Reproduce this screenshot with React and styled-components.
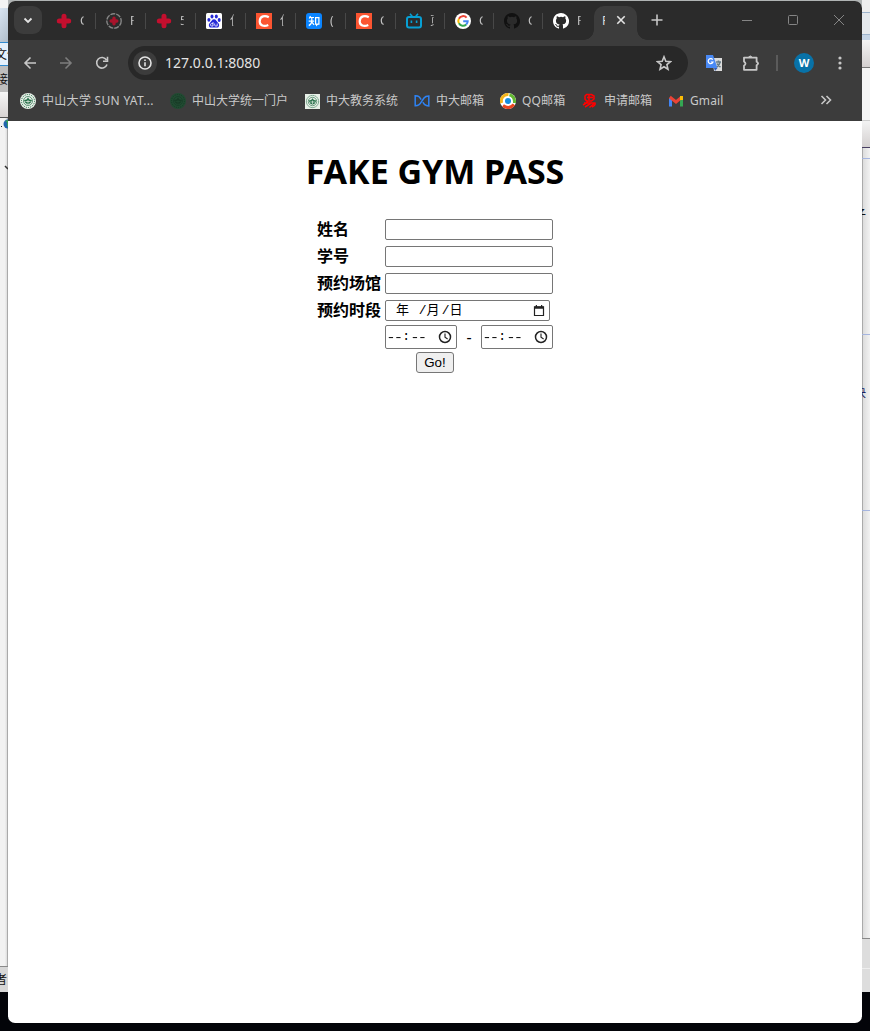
import React from 'react';
import styled, { createGlobalStyle } from 'styled-components';

const Global = createGlobalStyle`
  * { box-sizing: border-box; }
  body { margin: 0; background: #030409; overflow: hidden; }
`;
const ui = `'Noto Sans', 'Noto Sans CJK SC', sans-serif`;

const Desktop = styled.div`
  display: grid;
  grid-template-columns: 8px 854px 8px;
  width: 870px;
  height: 1031px;
  background: linear-gradient(#b0b4b4 0 12px, #030409 12px);
`;
const Edge = styled.div`
  display: flex;
  flex-direction: column;
  height: 992px;
  overflow: hidden;
  background: ${p => p.$left ? 'linear-gradient(90deg,#f2f2f2 60%,#ddd 7px,#aaa 7px)' : 'linear-gradient(90deg,#aaa 1px,#dcdcdc 1px,#f2f2f2)'};
`;
const Strip = styled.div`
  flex: none;
  height: ${p => p.$h}px;
  background: ${p => p.$bg || 'transparent'};
  border-top: ${p => p.$line ? `1px solid ${p.$line}` : '0'};
  font: 12px/${p => p.$h}px ${ui};
  color: ${p => p.$ink || '#111'};
  white-space: nowrap;
  overflow: hidden;
  svg { display: block; }
`;
const Glyph = styled.span`
  display: block;
  margin-left: ${p => p.$shift}px;
`;
const Window = styled.div`
  margin-top: 1px;
  height: 1022px;
  display: flex;
  flex-direction: column;
  border-radius: 7px;
  overflow: hidden;
  background: #fff;
`;
const TabStrip = styled.div`
  height: 39px;
  flex: none;
  display: flex;
  background: #2b2b2b;
  padding-left: 6px;
`;
const TabSearch = styled.div`
  width: 28px;
  height: 28px;
  margin: 5px 4px 0 0;
  border-radius: 9px;
  background: #3c3c3c;
`;
const Tab = styled.div`
  width: ${p => p.$w}px;
  height: 39px;
  display: flex;
  align-items: center;
  padding-left: 10px;
  svg { flex: none; }
`;
const TabTitle = styled.span`
  width: 4px;
  margin-left: 8px;
  overflow: hidden;
  white-space: nowrap;
  font: 12px/16px ${ui};
  color: #c7c7c7;
  mask-image: linear-gradient(90deg, #000 50%, #0006);
`;
const TabDivider = styled.span`
  width: 1px;
  height: 16px;
  margin-left: ${p => p.$gap}px;
  background: #484848;
`;
const ActiveTab = styled.div`
  width: 43px;
  height: 34px;
  margin: 5px 0 0 1px;
  padding-left: 8px;
  display: flex;
  align-items: center;
  background: #3c3c3c;
  border-radius: 10px 10px 0 0;
  position: relative;
  &::before, &::after {
    content: '';
    position: absolute;
    bottom: 0;
    width: 10px;
    height: 10px;
  }
  &::before { left: -10px; background: radial-gradient(circle at 0 0, transparent 9.5px, #3c3c3c 10px); }
  &::after { right: -10px; background: radial-gradient(circle at 100% 0, transparent 9.5px, #3c3c3c 10px); }
`;
const ActiveTitle = styled.span`
  width: 3px;
  overflow: hidden;
  font: 12px/16px ${ui};
  color: #ddd;
  margin-right: 8px;
  padding-bottom: 4px;
  height: 20px;
`;
const CloseWrap = styled.div`
  height: 16px;
  margin-top: -6px;
`;
const NewTab = styled.div`
  margin: 11px 0 0 12px;
  height: 16px;
`;
const Controls = styled.div`
  display: flex;
  gap: 30px;
  margin: 11px 15px 0 auto;
`;
const Chrome = styled.div`
  background: #3c3c3c;
  flex: none;
  height: 81px;
`;
const NavBar = styled.div`
  display: flex;
  align-items: center;
  height: 46px;
  padding-left: 14px;
`;
const NavIcon = styled.div`
  width: 16px;
  height: 16px;
  margin-right: ${p => p.$gap}px;
  svg { display: block; }
`;
const Omnibox = styled.div`
  width: 560px;
  height: 34px;
  border-radius: 17px;
  background: #282828;
  display: flex;
  align-items: center;
  padding: 0 16px 0 5px;
  color: #e3e3e3;
  font: 14px/20px ${ui};
`;
const Url = styled.span`
  letter-spacing: 0.02px;
  margin-top: -1px;
`;
const SiteInfo = styled.div`
  width: 24px;
  height: 24px;
  border-radius: 50%;
  background: #3c3c3c;
  margin-right: 8px;
  display: grid;
  place-items: center;
`;
const StarWrap = styled.div`
  margin-left: auto;
  height: 16px;
  svg { display: block; }
`;
const Extensions = styled.div`
  display: flex;
  align-items: center;
  padding-left: 18px;
`;
const ToolDivider = styled.div`
  width: 2px;
  height: 16px;
  background: #5b5b5b;
  margin: 0 16px 0 17px;
`;
const Avatar = styled.div`
  width: 20px;
  height: 20px;
  border-radius: 50%;
  background: #0872a8;
  color: #fff;
  font: bold 11px/20px ${ui};
  text-align: center;
  margin-right: 18px;
`;
const Bookmarks = styled.div`
  height: 30px;
  display: flex;
  align-items: center;
  padding-left: 12px;
  color: #c9c9c9;
`;
const Bookmark = styled.div`
  width: ${p => p.$w}px;
  flex: none;
  display: flex;
  align-items: center;
  gap: 6px;
  white-space: nowrap;
  font: 12px/16px ${ui};
  letter-spacing: ${p => p.$track || 0}px;
  svg { flex: none; }
`;
const More = styled.div`
  margin-left: auto;
  margin-right: 28px;
  height: 18px;
`;
const Page = styled.main`
  display: flex;
  flex-direction: column;
  align-items: center;
  font-family: ${ui};
  color: #000;
`;
const Title = styled.h1`
  margin: 26px 0 21px;
  font: bold 34px/48px ${ui};
  letter-spacing: -0.04px;
  white-space: nowrap;
`;
const Form = styled.div`
  width: 236px;
  display: flex;
  flex-direction: column;
`;
const Row = styled.div`
  display: flex;
  align-items: center;
  height: 27px;
  margin-bottom: ${p => p.$after || 0}px;
`;
const Label = styled.label`
  width: 68px;
  flex: none;
  font: bold 16px/21px ${ui};
`;
const Field = styled.div`
  width: ${p => p.$w || 168}px;
  height: ${p => p.$h || 21}px;
  flex: none;
  border: 1px solid #767676;
  border-radius: 2px;
  display: flex;
  align-items: center;
  background: #fff;
  padding: 0 ${p => p.$right || 0}px 0 ${p => p.$leftPad || 0}px;
  justify-content: space-between;
  font: 13px/16px 'Liberation Mono', 'Noto Sans CJK SC', monospace;
  white-space: pre;
`;
const DateParts = styled.span`
  display: flex;
  gap: 2px;
  margin-left: -1px;
`;
const TimeDigits = styled.span`
  display: flex;
  align-items: center;
  margin-top: -1px;
`;
const Digits = styled.span`
  display: inline-block;
  width: 11.2px;
  transform: scaleX(1.35);
  transform-origin: 0 50%;
  font: 13px/16px 'Liberation Sans', sans-serif;
  letter-spacing: 1.2px;
`;
const Colon = styled.span`
  width: 8px;
  margin: 0 2px 0 3px;
  text-align: center;
`;
const Dash = styled.span`
  width: 24px;
  text-align: center;
  font: 16px/20px ${ui};
`;
const Times = styled.div`
  display: flex;
  align-items: center;
  padding-left: 68px;
  height: 24px;
  margin-top: -2px;
`;
const Go = styled.button`
  align-self: center;
  width: 38px;
  height: 21px;
  margin-top: 3px;
  padding: 0;
  border: 1px solid #767676;
  border-radius: 3px;
  background: #efefef;
  color: #000;
  font: 13.33px/17px 'Liberation Sans', sans-serif;
`;

const Svg = ({ s = 16, c = '#c7c7c7', w = 1.6, children, ...r }) => (
  <svg width={s} height={s} viewBox="0 0 16 16" fill="none" stroke={c} strokeWidth={w} {...r}>{children}</svg>
);
const Cross = () => <Svg c="#c40f2e" w="5" strokeLinecap="round"><path d="M8 3.300v9.400M3.300 8h9.400" /></Svg>;
const RingCross = () => (
  <Svg c="#858585" w="1.400"><circle cx="8" cy="8" r="7.200" strokeDasharray="5 1" /><path d="M8 5.200v5.600M5.200 8h5.600" stroke="#a9132b" strokeWidth="3.400" strokeLinecap="round" /></Svg>
);
const Baidu = () => (
  <Svg stroke="none"><rect width="16" height="16" rx="1.500" fill="#fff" />
    <g fill="#2529d8"><ellipse cx="6" cy="3.500" rx="1.500" ry="2" /><ellipse cx="10.300" cy="3.500" rx="1.500" ry="2" /><ellipse cx="2.900" cy="6.800" rx="1.500" ry="1.900" /><ellipse cx="13.200" cy="7" rx="1.500" ry="1.900" /><path d="M8 6.300c2 0 2.500 2 4 3.400 2 1.800 1.400 5-1.300 4.900-1.600-.2-3.600-.2-5.200 0C2.700 14.800 2 11.500 4 9.700 5.600 8.200 6 6.300 8 6.300Z" /></g>
    <path d="M7 9v4H5.500q-1 0-1-1.200t1-1.200H7M8.700 10.500v1.600q0 .9.900.9h1.600v-2.500" stroke="#fff" strokeWidth=".8" />
  </Svg>
);
const CIcon = () => <Svg w="2.200" c="#fff"><path fill="#fc5531" stroke="none" d="M0 0h16v16H0z" /><path d="M12.800 4.200C9 2 4 2.900 3.700 8.200c-.1 4.600 4.400 5.800 8.600 3.800" /></Svg>;
const Zhihu = () => <Svg w="1.200" c="#fff"><rect width="16" height="16" rx="3" fill="#0a84ff" stroke="none" /><path d="M4.500 3 3.300 5.500M4 4.500h4M5.800 4.500v3.700M2.700 8.200h5.500M5.800 8q0 3-3 4.600M6.200 9.500l1.900 2.300M9.600 4.700h3.300v6.500h-1.300l-1 1-.2-1h-.8z" /></Svg>;
const Bili = () => <Svg c="#079fd3" w="2"><rect x="1" y="4" width="14" height="10.500" rx="2" /><path d="m4 .7 2.500 3M12 .7l-2.500 3M5.400 7.500v2.500M10.600 7.500v2.500" strokeWidth="1.600" /></Svg>;
const Google = () => (
  <Svg w="2"><circle cx="8" cy="8" r="8" fill="#fff" stroke="none" /><path d="M11.600 4.700A4.700 4.700 0 0 0 3.900 5.700" stroke="#ea4335" /><path d="M3.900 5.700a4.700 4.700 0 0 0 0 4.600" stroke="#fbbc05" /><path d="M3.900 10.300a4.700 4.700 0 0 0 7.300 1.200" stroke="#34a853" /><path d="M11.200 11.500A4.600 4.600 0 0 0 12.700 8.200H8.200" stroke="#4285f4" /></Svg>
);
const Hub = ({ c }) => <svg width="16" height="16" viewBox="0 0 16 16" fill={c}><path d="M8 0C3.580 0 0 3.580 0 8c0 3.540 2.290 6.530 5.470 7.590.4.070.55-.17.55-.38v-1.490c-2.010.37-2.530-.49-2.690-.94-.09-.23-.48-.94-.82-1.130-.28-.15-.68-.52-.01-.53.63-.01 1.080.58 1.230.82.72 1.210 1.870.87 2.330.66.07-.52.28-.87.51-1.070-1.780-.2-3.640-.89-3.640-3.950 0-.87.31-1.590.82-2.150-.08-.2-.36-1.020.08-2.120 0 0 .67-.21 2.200.82a7.400 7.400 0 0 1 4 0c1.530-1.040 2.200-.82 2.200-.82.44 1.100.16 1.920.08 2.120.51.56.82 1.270.82 2.150 0 3.070-1.870 3.750-3.650 3.950.29.25.54.73.54 1.480v2.200c0 .21.15.46.55.38A8 8 0 0 0 8 0Z" /></svg>;
const Seal = ({ bg = '#e8f0e8', c = '#27704a', square }) => (
  <Svg s={square ? 15 : 16} c={c} w="1"><rect width="16" height="16" rx={square ? 0 : 8} fill={bg} stroke="none" /><circle cx="8" cy="8" r="6.500" strokeDasharray="1.200 1" /><circle cx="8" cy="8" r="4.500" strokeWidth=".7" /><path fill={c} stroke="none" d="M8 4.500 9.500 6.500 12 7l-1.500 3L8 11.500 5.500 10 4 7l2.500-.5z" /><path d="M5.500 8.500h5M8 7v4" stroke={bg} strokeWidth=".7" /></Svg>
);
const SuiteMail = () => <Svg c="#2e83f4" w="1.500"><path d="M5.300 3.800Q3.800 2.800 1.200 2.800v10Q5 13 7.200 9.200L10 5Q11.500 2.900 14.800 2.900v10q-2.600 0-4.100-1.200M5.300 3.800 7.200 6.700M8.800 9.100l1.900 2.600" /></Svg>;
const QQMail = () => <Svg w="3"><circle cx="8" cy="8" r="8" fill="#fff" stroke="none" /><path d="M1.700 10A6.500 6.500 0 0 1 8.500 1.500" stroke="#f4b51b" /><path d="M9.500 1.700Q15 3.500 14.500 10" stroke="#63b832" /><path d="M14 11.500q-5 5.500-11 1" stroke="#e84621" /><circle cx="8" cy="8" r="3" fill="#148de0" stroke="none" /></Svg>;
const RedMail = () => <Svg c="#f00" w="1.500"><path d="M4.500 1.500h5L12 3v3L9.500 8h-5L3 6V3zM5 4.500h6M7 2v5M2 10h11q1 2-3 4M6 9l-5 3M8.500 10.500 3 14M12 10.500 7.500 14.500" /></Svg>;
const Gmail = () => <Svg w="3"><path d="M2.500 13.500V5" stroke="#4285f4" /><path d="M13.500 13.500V5" stroke="#34a853" /><path d="m1.800 4 6.200 5 6-5" stroke="#ea4335" /><path d="M13.500 3v4" stroke="#fbbc05" /></Svg>;
const Translate = () => <Svg stroke="none"><path d="M6 3h10v13H8z" fill="#dcdcdc" /><path d="M0 0h7l4.500 13H0z" fill="#4989f5" /><path d="M8 13h3.500L9 16z" fill="#315bb0" /><path d="M6.700 4.600A2.500 2.500 0 1 0 7 7H4.800" stroke="#fff" strokeWidth="1.200" /><path d="M10 7h5M12.500 5.500V7M14 7q-.5 3-3 5M11 8.500q1 2 3.500 3.500" stroke="#667b86" /></Svg>;
const Puzzle = () => <Svg s={18} viewBox="0 0 18 18" w="1.800"><path strokeLinejoin="round" d="M2 2.600h12.600v4.200q2.800 1.500 0 3.400v4.600H2v-4q3-2.200 0-4.400z" /><path d="M6.200 2.400q2-3 4.200 0M15 6.700q2.500 1.800 0 3.500" fill="#c7c7c7" strokeWidth="1" /></Svg>;
const Clock = () => <Svg s={14} c="#222" w="1.700"><circle cx="8" cy="8" r="6.300" /><path d="M8 4v4.300l3 2" strokeWidth="1.300" /></Svg>;
const Calendar = () => <Svg s={12} c="#222" w="1.600"><path d="M2 2.500h12V14H2zM4.500 0v3M11.500 0v3" /><path d="M2 3.500h12" strokeWidth="3" /></Svg>;
const Globe = () => <svg width="8" height="13" viewBox="0 0 8 13"><path d="M1 8h1v1H1z" fill="#222" /><circle cx="8" cy="6" r="4.500" fill="#2164ad" /><path d="M5 3q3 1 2 4l1 3V2z" fill="#3aa450" /></svg>;
const Tick = () => <svg width="8" height="8" viewBox="0 0 8 8"><path d="m5 2 3 3" stroke="#333" strokeWidth="1.500" /></svg>;

const TimeField = () => (
  <Field $w={72} $h={24} $leftPad={2} $right={4}>
    <TimeDigits><Digits>--</Digits><Colon>:</Colon><Digits>--</Digits></TimeDigits><Clock />
  </Field>
);

const tabs = [
  [Cross, 'G', 50], [RingCross, 'F', 50], [Cross, '5', 50], [Baidu, '使', 50], [CIcon, '使', 50], [Zhihu, '(', 50],
  [CIcon, 'C', 50], [Bili, '页', 49], [Google, 'G', 49], [() => <Hub c="#111" />, 'G', 49], [() => <Hub c="#fff" />, 'F', 50],
];

export default function App() {
  return (
    <Desktop>
      <Global />
      <Edge $left>
        <Strip $h={8} $bg="#f4f4f4" /><Strip $h={34} $bg="linear-gradient(120deg,#d9e5f2,#afbdca)" />
        <Strip $h={23} $bg="#e4f0fb" $line="#318bd0"><Glyph $shift={-5}>文件</Glyph></Strip>
        <Strip $h={27} $bg="#bebebe" $line="#318bd0"><Glyph $shift={-4}>接</Glyph></Strip>
        <Strip $h={25} $bg="linear-gradient(#f6f6f6,#d8d4d4)" />
        <Strip $h={14} $line="#555"><Globe /></Strip>
        <Strip $h={33} /><Strip $h={8}><Tick /></Strip><Strip $h={794} />
        <Strip $h={26} $bg="#d7d7d7" $line="#8a8a8a"><Glyph $shift={-5}>者</Glyph></Strip>
      </Edge>
      <Window>
        <TabStrip>
          <TabSearch><Svg s={28} viewBox="0 0 28 28" c="#e3e3e3" w="1.800"><path d="m10.500 12.500 3.500 3.500 3.500-3.500" /></Svg></TabSearch>
          {tabs.map(([Icon, title, w], i) => (
            <Tab key={i} $w={w}><Icon /><TabTitle>{title}</TabTitle>{i < 10 && <TabDivider $gap={w - 39} />}</Tab>
          ))}
          <ActiveTab><ActiveTitle>F</ActiveTitle><CloseWrap><Svg c="#e3e3e3" w="1.600"><path d="m4.300 4.300 7.400 7.400m0-7.400-7.400 7.400" /></Svg></CloseWrap></ActiveTab>
          <NewTab><Svg><path d="M8 2.500v11M2.500 8h11" /></Svg></NewTab>
          <Controls>
            <Svg c="#858585" w="1"><path d="M3 8.500h10" /></Svg><Svg c="#858585" w="1"><rect x="3.500" y="3.500" width="9" height="9" rx="1" /></Svg><Svg c="#858585" w="1"><path d="m3 3 10 10m0-10L3 13" /></Svg>
          </Controls>
        </TabStrip>
        <Chrome>
          <NavBar>
            <NavIcon $gap={20}><Svg><path d="M14 8H3m5.500-5.500L3 8l5.500 5.500" /></Svg></NavIcon>
            <NavIcon $gap={20}><Svg c="#7d7d7d"><path d="M2 8h11M7.500 2.500 13 8l-5.500 5.500" /></Svg></NavIcon>
            <NavIcon $gap={18}><Svg><path d="M13 9.500A5.300 5.300 0 1 1 12.500 5M13.500 1.800v4.500H9" /></Svg></NavIcon>
            <Omnibox>
              <SiteInfo><Svg c="#e3e3e3"><circle cx="8" cy="8" r="6" /><path d="M8 7.300v4M8 4.500v1.500" /></Svg></SiteInfo>
              <Url>127.0.0.1:8080</Url>
              <StarWrap><Svg w="1.600"><path d="m8 1.800 1.800 4.400 4.700.4-3.600 3 1.100 4.700-4-2.500-4 2.500 1.100-4.700-3.600-3 4.700-.4z" /></Svg></StarWrap>
            </Omnibox>
            <Extensions>
              <NavIcon $gap={20}><Translate /></NavIcon>
              <NavIcon $gap={1}><Puzzle /></NavIcon>
              <ToolDivider />
              <Avatar>W</Avatar>
              <Svg fill="#c7c7c7" stroke="none"><circle cx="8" cy="3" r="1.600" /><circle cx="8" cy="8" r="1.600" /><circle cx="8" cy="13" r="1.600" /></Svg>
            </Extensions>
          </NavBar>
          <Bookmarks>
            <Bookmark $w={150} $track={0.3}><Seal />中山大学 SUN YAT...</Bookmark>
            <Bookmark $w={135}><Seal bg="#214b32" c="#173b26" />中山大学统一门户</Bookmark>
            <Bookmark $w={109}><Seal square />中大教务系统</Bookmark>
            <Bookmark $w={86}><SuiteMail />中大邮箱</Bookmark>
            <Bookmark $w={82} $track={0.15}><QQMail />QQ邮箱</Bookmark>
            <Bookmark $w={86}><RedMail />申请邮箱</Bookmark>
            <Bookmark $w={70} $track={0.1}><Gmail />Gmail</Bookmark>
            <More><Svg><path d="m3.500 4 4 4-4 4m5-8 4 4-4 4" /></Svg></More>
          </Bookmarks>
        </Chrome>
        <Page>
          <Title>FAKE GYM PASS</Title>
          <Form>
            <Row><Label>姓名</Label><Field /></Row>
            <Row><Label>学号</Label><Field /></Row>
            <Row><Label>预约场馆</Label><Field /></Row>
            <Row $after={3}><Label>预约时段</Label><Field $w={165} $leftPad={11} $right={4}><DateParts><span>年 </span><span>/月</span><span>/日</span></DateParts><Calendar /></Field></Row>
            <Times><TimeField /><Dash>-</Dash><TimeField /></Times>
            <Go>Go!</Go>
          </Form>
        </Page>
      </Window>
      <Edge>
        <Strip $h={12} $bg="#eee" /><Strip $h={22} $bg="#e5e9ed" $line="#9db4cd" /><Strip $h={6} $bg="#c4d4e6" $line="#9db4cd" />
        <Strip $h={27} $bg="linear-gradient(#f3f3f3,#d4d0d0)" /><Strip $h={53} $bg="#f4f4f4" $line="#777" />
        <Strip $h={27} $bg="linear-gradient(#f3f3f3,#d4d0d0)" $line="#ccc" /><Strip $h={11} $line="#483e62" />
        <Strip $h={44} $line="#a5b5df" /><Strip $h={26}><Glyph $shift={-8}>子</Glyph></Strip><Strip $h={106} />
        <Strip $h={46} $line="#a5b5df" /><Strip $h={26} $ink="#202060"><Glyph $shift={-8}>决</Glyph></Strip><Strip $h={104} />
        <Strip $h={428} $line="#a5b5df" /><Strip $h={30} $bg="#ddd" $line="#888" /><Strip $h={24} $bg="#ddd" $line="#eee" />
      </Edge>
    </Desktop>
  );
}
